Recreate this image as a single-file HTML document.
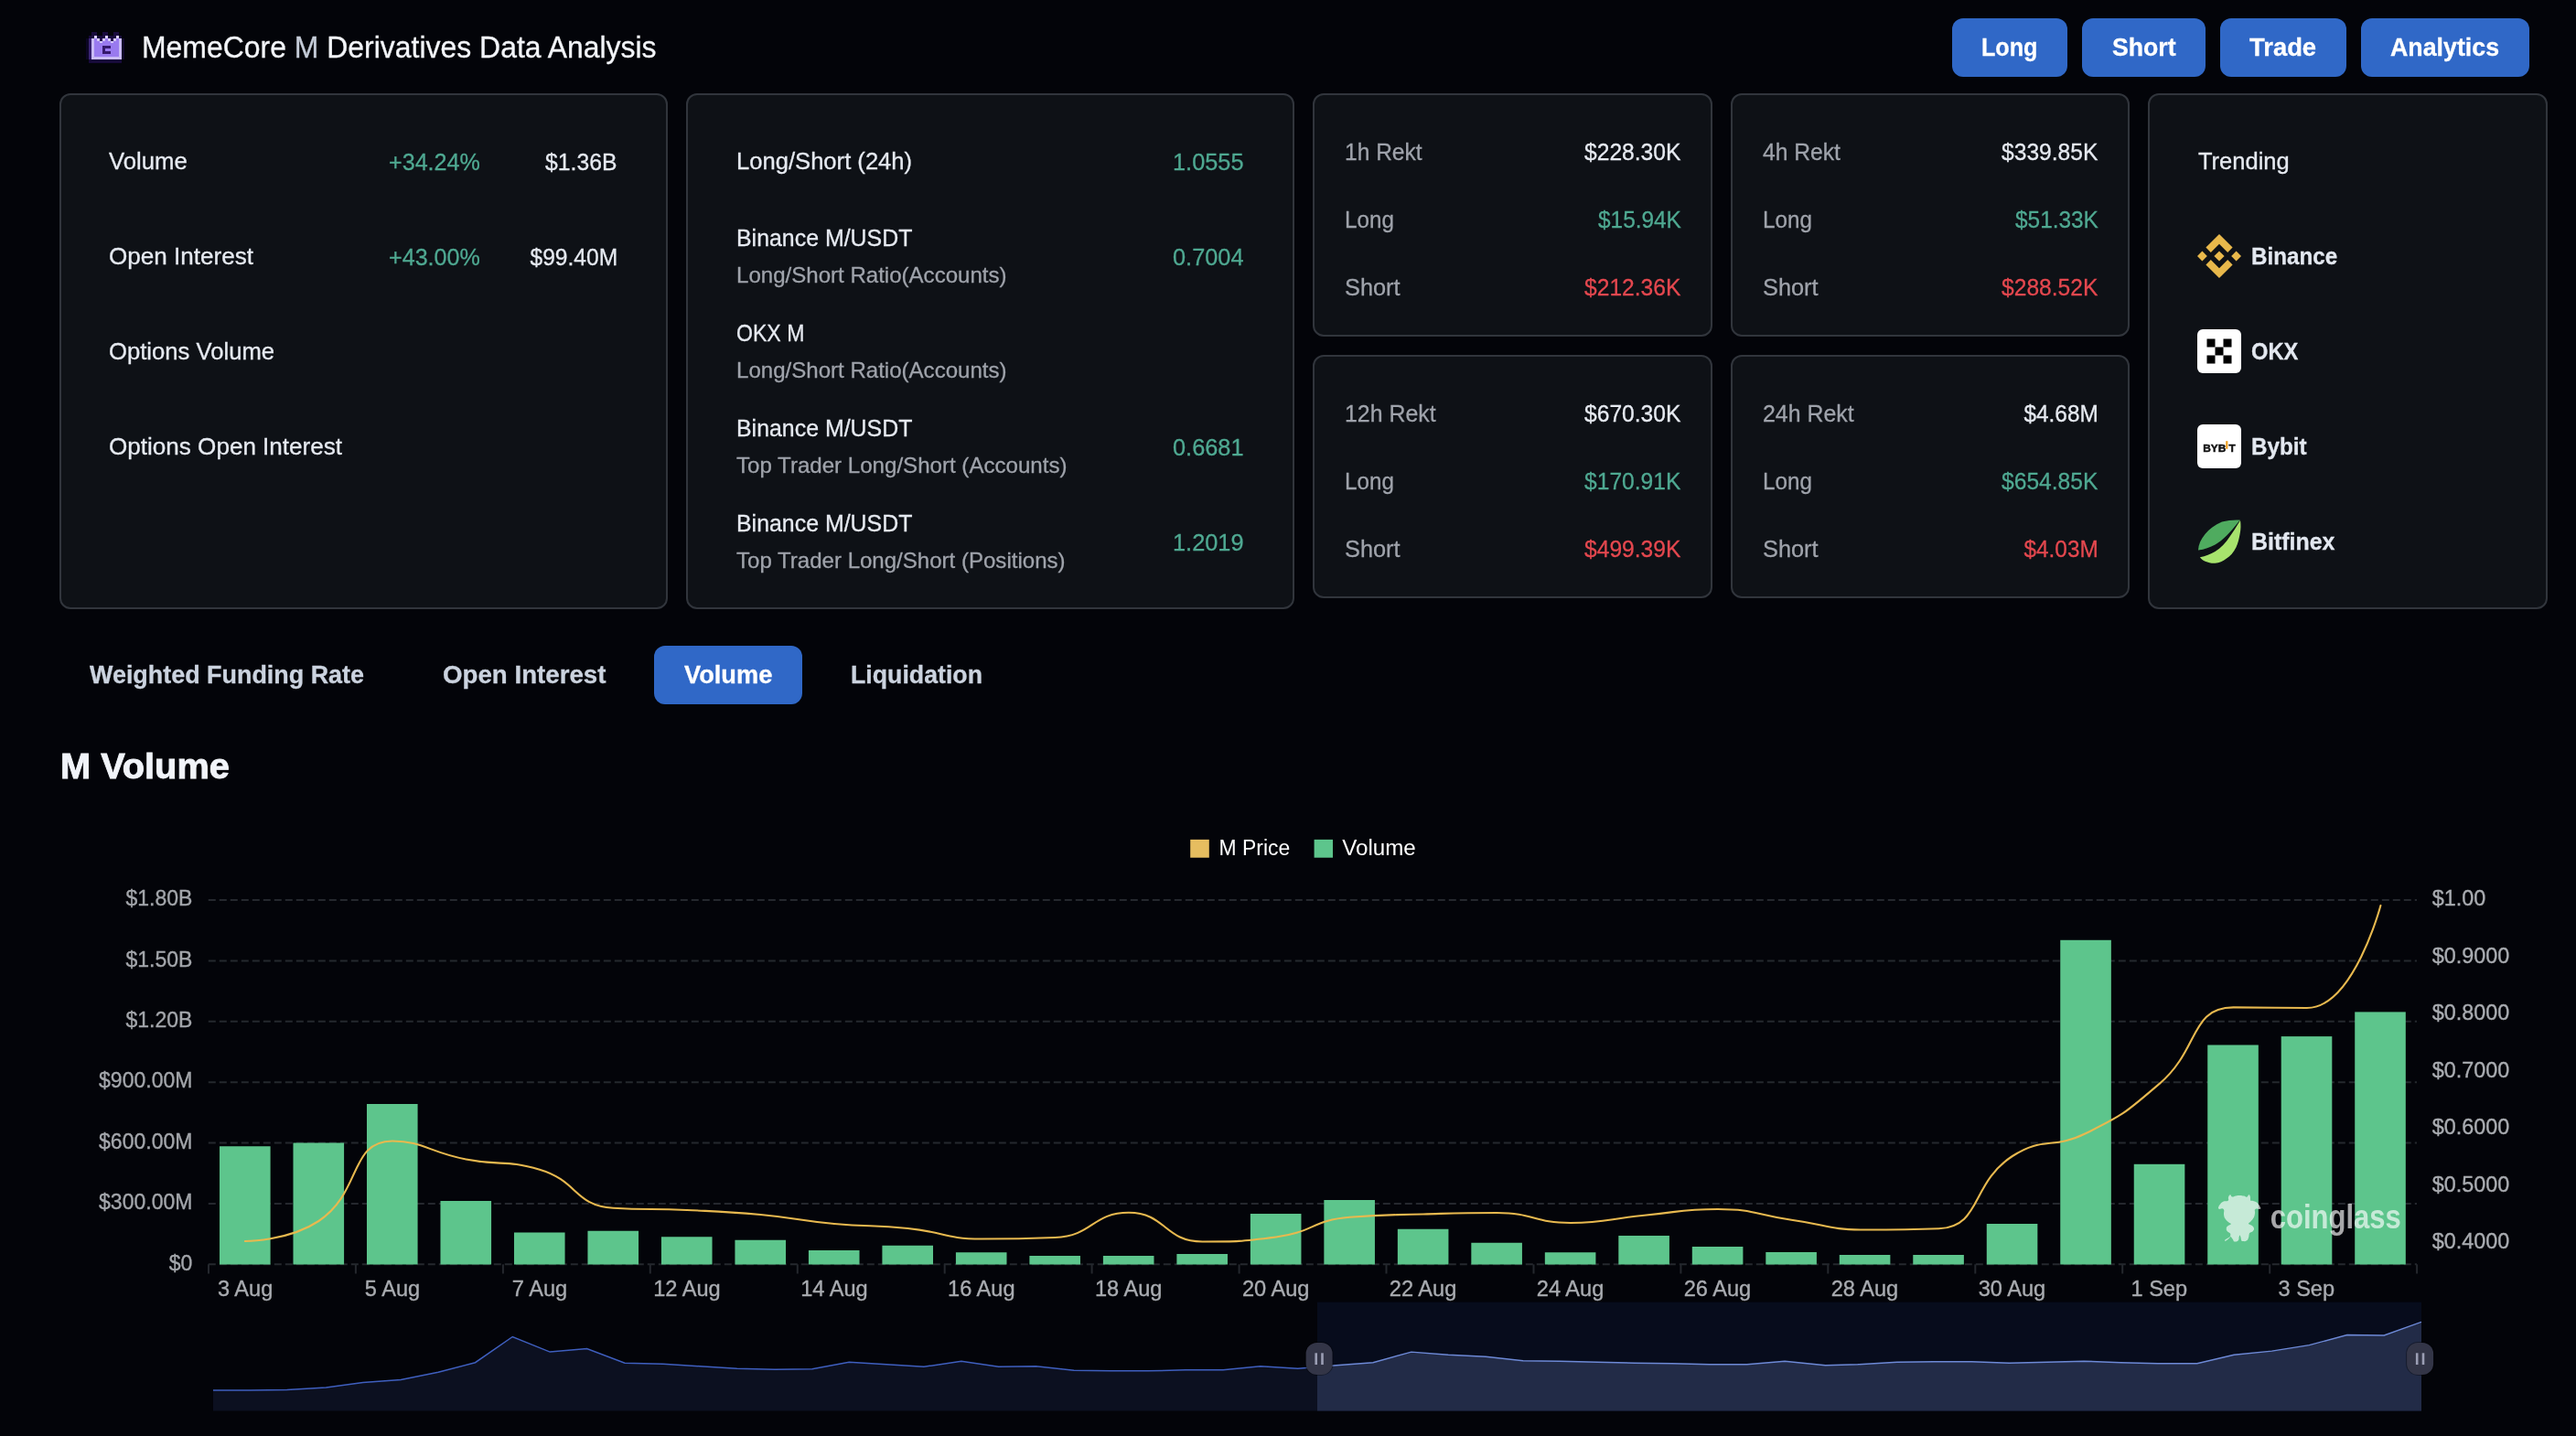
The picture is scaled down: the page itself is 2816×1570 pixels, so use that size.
<!DOCTYPE html>
<html lang="en"><head><meta charset="utf-8"><title>MemeCore M Derivatives Data Analysis</title>
<style>
html,body{margin:0;padding:0;background:#030409;}
body{width:2816px;height:1570px;overflow:hidden;position:relative;font-family:"Liberation Sans",sans-serif;}
#app{position:absolute;left:0;top:0;width:2816px;height:1570px;will-change:transform}
.abs{position:absolute;display:block}
.t{position:absolute;white-space:nowrap;line-height:1;display:block;-webkit-text-stroke:0.3px currentColor}
.card{position:absolute;box-sizing:border-box;background:#0e1116;border:2px solid #31353c;border-radius:12px}
.btn{position:absolute;background:#3068c7;border-radius:12px}
</style></head>
<body>
<div id="app">
<svg class="abs" style="left:94px;top:35px" width="44" height="35" viewBox="94 35 44 35" shape-rendering="crispEdges">
<rect x="94" y="41.8" width="3.2" height="23.2" fill="#0c0624"/>
<rect x="97" y="39.2" width="36" height="29.6" fill="#170a3a"/>
<rect x="133" y="41.8" width="3" height="23.2" fill="#0e0628"/>
<rect x="100" y="35.2" width="6" height="4.2" fill="#190b3d"/><rect x="112" y="35.2" width="6" height="4.2" fill="#190b3d"/><rect x="124" y="35.2" width="6" height="4.2" fill="#190b3d"/>
<rect x="97" y="41.8" width="3" height="23.2" fill="#36216f"/>
<rect x="100" y="41.8" width="33" height="23.2" fill="#c9bbf7"/>
<rect x="103" y="41.8" width="27" height="20.3" fill="#997aef"/>
<rect x="109" y="41.8" width="3" height="2.7" fill="#25114f"/><rect x="121" y="41.8" width="3" height="2.7" fill="#25114f"/>
<rect x="103" y="39.2" width="3" height="2.7" fill="#d9cefb"/><rect x="115" y="39.2" width="3" height="2.7" fill="#d9cefb"/><rect x="127" y="39.2" width="3" height="2.7" fill="#d9cefb"/>
<rect x="106" y="41.8" width="3" height="2.7" fill="#d3c6fa"/><rect x="112" y="41.8" width="3" height="2.7" fill="#d3c6fa"/><rect x="118" y="41.8" width="3" height="2.7" fill="#d3c6fa"/><rect x="124" y="41.8" width="3" height="2.7" fill="#d3c6fa"/>
<rect x="109" y="44.5" width="3" height="2.7" fill="#d3c6fa"/><rect x="121" y="44.5" width="3" height="2.7" fill="#d3c6fa"/>
<path d="M112.1 50.3H120.8V53.4H115.2V56.3H120.8V59.2H112.1Z" fill="#35196d"/>
</svg>
<span class="t" id="t1" style="top:35.5px;font-size:32.5px;color:#f3f5f9;left:154.6px;transform-origin:0 50%;transform:scaleX(0.9825);">MemeCore <span style="color:#c5ccd8">M</span> Derivatives Data Analysis</span>
<div class="btn" style="left:2134px;top:20px;width:126px;height:64px"></div>
<span class="t" id="t2" style="top:38.1px;font-size:28px;color:#ffffff;left:2166.4px;transform-origin:0 50%;font-weight:700;transform:scaleX(0.8985);">Long</span>
<div class="btn" style="left:2276px;top:20px;width:135px;height:64px"></div>
<span class="t" id="t3" style="top:38.1px;font-size:28px;color:#ffffff;left:2308.8px;transform-origin:0 50%;font-weight:700;transform:scaleX(0.9521);">Short</span>
<div class="btn" style="left:2427px;top:20px;width:138px;height:64px"></div>
<span class="t" id="t4" style="top:38.1px;font-size:28px;color:#ffffff;left:2459.3px;transform-origin:0 50%;font-weight:700;transform:scaleX(0.9787);">Trade</span>
<div class="btn" style="left:2581px;top:20px;width:184px;height:64px"></div>
<span class="t" id="t5" style="top:38.1px;font-size:28px;color:#ffffff;left:2613.2px;transform-origin:0 50%;font-weight:700;transform:scaleX(0.9560);">Analytics</span>
<div class="card" style="left:65.0px;top:102.0px;width:665.0px;height:564.0px"></div>
<div class="card" style="left:750.0px;top:102.0px;width:665.0px;height:564.0px"></div>
<div class="card" style="left:1435.0px;top:102.0px;width:437.0px;height:266.0px"></div>
<div class="card" style="left:1892.0px;top:102.0px;width:436.0px;height:266.0px"></div>
<div class="card" style="left:1435.0px;top:388.0px;width:437.0px;height:266.0px"></div>
<div class="card" style="left:1892.0px;top:388.0px;width:436.0px;height:266.0px"></div>
<div class="card" style="left:2348.0px;top:102.0px;width:437.0px;height:564.0px"></div>
<span class="t" id="t6" style="top:163.0px;font-size:26px;color:#e6eaf1;left:119.0px;transform-origin:0 50%;transform:scaleX(0.9885);">Volume</span>
<span class="t" id="t7" style="top:163.5px;font-size:26px;color:#4fa992;left:425.4px;transform-origin:0 50%;transform:scaleX(0.9660);">+34.24%</span>
<span class="t" id="t8" style="top:163.5px;font-size:26px;color:#e6eaf1;right:2141.2px;transform-origin:100% 50%;transform:scaleX(0.9512);">$1.36B</span>
<span class="t" id="t9" style="top:267.0px;font-size:26px;color:#e6eaf1;left:119.0px;transform-origin:0 50%;transform:scaleX(1.0032);">Open Interest</span>
<span class="t" id="t10" style="top:267.5px;font-size:26px;color:#4fa992;left:425.4px;transform-origin:0 50%;transform:scaleX(0.9660);">+43.00%</span>
<span class="t" id="t11" style="top:267.5px;font-size:26px;color:#e6eaf1;right:2141.2px;transform-origin:100% 50%;transform:scaleX(0.9455);">$99.40M</span>
<span class="t" id="t12" style="top:371.0px;font-size:26px;color:#e6eaf1;left:119.0px;transform-origin:0 50%;transform:scaleX(0.9864);">Options Volume</span>
<span class="t" id="t13" style="top:475.0px;font-size:26px;color:#e6eaf1;left:119.0px;transform-origin:0 50%;transform:scaleX(1.0028);">Options Open Interest</span>
<span class="t" id="t14" style="top:163.2px;font-size:26px;color:#e6eaf1;left:804.8px;transform-origin:0 50%;transform:scaleX(0.9846);">Long/Short (24h)</span>
<span class="t" id="t15" style="top:164.0px;font-size:26px;color:#4fa992;right:1456.0px;transform-origin:100% 50%;transform:scaleX(0.9750);">1.0555</span>
<span class="t" id="t16" style="top:247.2px;font-size:26px;color:#e6eaf1;left:804.8px;transform-origin:0 50%;transform:scaleX(0.9577);">Binance M/USDT</span>
<span class="t" id="t17" style="top:289.1px;font-size:24px;color:#9fa3ab;left:804.8px;transform-origin:0 50%;transform:scaleX(1.0024);">Long/Short Ratio(Accounts)</span>
<span class="t" id="t18" style="top:268.2px;font-size:26px;color:#4fa992;right:1456.0px;transform-origin:100% 50%;transform:scaleX(0.9750);">0.7004</span>
<span class="t" id="t19" style="top:351.2px;font-size:26px;color:#e6eaf1;left:804.8px;transform-origin:0 50%;transform:scaleX(0.8881);">OKX M</span>
<span class="t" id="t20" style="top:393.1px;font-size:24px;color:#9fa3ab;left:804.8px;transform-origin:0 50%;transform:scaleX(1.0024);">Long/Short Ratio(Accounts)</span>
<span class="t" id="t21" style="top:455.2px;font-size:26px;color:#e6eaf1;left:804.8px;transform-origin:0 50%;transform:scaleX(0.9577);">Binance M/USDT</span>
<span class="t" id="t22" style="top:497.1px;font-size:24px;color:#9fa3ab;left:804.8px;transform-origin:0 50%;transform:scaleX(1.0036);">Top Trader Long/Short (Accounts)</span>
<span class="t" id="t23" style="top:476.2px;font-size:26px;color:#4fa992;right:1456.0px;transform-origin:100% 50%;transform:scaleX(0.9750);">0.6681</span>
<span class="t" id="t24" style="top:559.2px;font-size:26px;color:#e6eaf1;left:804.8px;transform-origin:0 50%;transform:scaleX(0.9577);">Binance M/USDT</span>
<span class="t" id="t25" style="top:601.1px;font-size:24px;color:#9fa3ab;left:804.8px;transform-origin:0 50%;transform:scaleX(1.0019);">Top Trader Long/Short (Positions)</span>
<span class="t" id="t26" style="top:580.2px;font-size:26px;color:#4fa992;right:1456.0px;transform-origin:100% 50%;transform:scaleX(0.9750);">1.2019</span>
<span class="t" id="t27" style="top:153.0px;font-size:26px;color:#9fa3ab;left:1470.0px;transform-origin:0 50%;transform:scaleX(0.9444);">1h Rekt</span>
<span class="t" id="t28" style="top:153.3px;font-size:26px;color:#e6eaf1;right:978.6px;transform-origin:100% 50%;transform:scaleX(0.9459);">$228.30K</span>
<span class="t" id="t29" style="top:227.0px;font-size:26px;color:#9fa3ab;left:1470.0px;transform-origin:0 50%;transform:scaleX(0.9310);">Long</span>
<span class="t" id="t30" style="top:227.3px;font-size:26px;color:#4fa992;right:978.6px;transform-origin:100% 50%;transform:scaleX(0.9381);">$15.94K</span>
<span class="t" id="t31" style="top:301.0px;font-size:26px;color:#9fa3ab;left:1470.0px;transform-origin:0 50%;transform:scaleX(0.9742);">Short</span>
<span class="t" id="t32" style="top:301.3px;font-size:26px;color:#e5484f;right:978.6px;transform-origin:100% 50%;transform:scaleX(0.9459);">$212.36K</span>
<span class="t" id="t33" style="top:153.0px;font-size:26px;color:#9fa3ab;left:1927.0px;transform-origin:0 50%;transform:scaleX(0.9478);">4h Rekt</span>
<span class="t" id="t34" style="top:153.3px;font-size:26px;color:#e6eaf1;right:522.6px;transform-origin:100% 50%;transform:scaleX(0.9459);">$339.85K</span>
<span class="t" id="t35" style="top:227.0px;font-size:26px;color:#9fa3ab;left:1927.0px;transform-origin:0 50%;transform:scaleX(0.9310);">Long</span>
<span class="t" id="t36" style="top:227.3px;font-size:26px;color:#4fa992;right:522.6px;transform-origin:100% 50%;transform:scaleX(0.9381);">$51.33K</span>
<span class="t" id="t37" style="top:301.0px;font-size:26px;color:#9fa3ab;left:1927.0px;transform-origin:0 50%;transform:scaleX(0.9742);">Short</span>
<span class="t" id="t38" style="top:301.3px;font-size:26px;color:#e5484f;right:522.6px;transform-origin:100% 50%;transform:scaleX(0.9459);">$288.52K</span>
<span class="t" id="t39" style="top:439.0px;font-size:26px;color:#9fa3ab;left:1470.0px;transform-origin:0 50%;transform:scaleX(0.9567);">12h Rekt</span>
<span class="t" id="t40" style="top:439.3px;font-size:26px;color:#e6eaf1;right:978.6px;transform-origin:100% 50%;transform:scaleX(0.9459);">$670.30K</span>
<span class="t" id="t41" style="top:513.0px;font-size:26px;color:#9fa3ab;left:1470.0px;transform-origin:0 50%;transform:scaleX(0.9310);">Long</span>
<span class="t" id="t42" style="top:513.3px;font-size:26px;color:#4fa992;right:978.6px;transform-origin:100% 50%;transform:scaleX(0.9459);">$170.91K</span>
<span class="t" id="t43" style="top:587.0px;font-size:26px;color:#9fa3ab;left:1470.0px;transform-origin:0 50%;transform:scaleX(0.9742);">Short</span>
<span class="t" id="t44" style="top:587.3px;font-size:26px;color:#e5484f;right:978.6px;transform-origin:100% 50%;transform:scaleX(0.9459);">$499.39K</span>
<span class="t" id="t45" style="top:439.0px;font-size:26px;color:#9fa3ab;left:1927.0px;transform-origin:0 50%;transform:scaleX(0.9567);">24h Rekt</span>
<span class="t" id="t46" style="top:439.3px;font-size:26px;color:#e6eaf1;right:522.6px;transform-origin:100% 50%;transform:scaleX(0.9368);">$4.68M</span>
<span class="t" id="t47" style="top:513.0px;font-size:26px;color:#9fa3ab;left:1927.0px;transform-origin:0 50%;transform:scaleX(0.9310);">Long</span>
<span class="t" id="t48" style="top:513.3px;font-size:26px;color:#4fa992;right:522.6px;transform-origin:100% 50%;transform:scaleX(0.9459);">$654.85K</span>
<span class="t" id="t49" style="top:587.0px;font-size:26px;color:#9fa3ab;left:1927.0px;transform-origin:0 50%;transform:scaleX(0.9742);">Short</span>
<span class="t" id="t50" style="top:587.3px;font-size:26px;color:#e5484f;right:522.6px;transform-origin:100% 50%;transform:scaleX(0.9368);">$4.03M</span>
<span class="t" id="t51" style="top:163.0px;font-size:26px;color:#e6eaf1;left:2402.8px;transform-origin:0 50%;transform:scaleX(0.9804);">Trending</span>
<svg class="abs" style="left:2402px;top:256px" width="48" height="48" viewBox="0 0 48 48">
<g fill="#e8b84b"><path d="M24 0 38.6 14.6 33.2 20 24 10.8 14.8 20 9.4 14.6Z"/><path d="M24 48 38.6 33.4 33.2 28 24 37.2 14.8 28 9.4 33.4Z"/>
<path d="M24 18.4 29.6 24 24 29.6 18.4 24Z"/><path d="M5.4 18.6 10.8 24 5.4 29.4 0 24Z"/><path d="M42.6 18.6 48 24 42.6 29.4 37.2 24Z"/></g></svg>
<svg class="abs" style="left:2402px;top:360px" width="48" height="48" viewBox="0 0 48 48">
<rect width="48" height="48" rx="6" fill="#fff"/><g fill="#000"><rect x="10.5" y="10.5" width="9" height="9"/><rect x="28.5" y="10.5" width="9" height="9"/><rect x="19.5" y="19.5" width="9" height="9"/><rect x="10.5" y="28.5" width="9" height="9"/><rect x="28.5" y="28.5" width="9" height="9"/></g></svg>
<svg class="abs" style="left:2402px;top:464px" width="48" height="48" viewBox="0 0 48 48">
<rect width="48" height="48" rx="6" fill="#fff"/>
<text x="6.2" y="29.8" font-family="Liberation Sans, sans-serif" font-weight="700" font-size="11.8" fill="#111" stroke="#111" stroke-width="0.5" textLength="35.6" lengthAdjust="spacingAndGlyphs">BYB T</text>
<rect x="31.2" y="18.2" width="2.2" height="8.6" fill="#f0a020"/></svg>
<svg class="abs" style="left:2402px;top:568px" width="48" height="48" viewBox="0 0 48 48">
<path d="M46.8 0.6C40 0.2 33 1 27 2.6 19 6 13 10.5 8.5 16 4 21.5 1.2 27.5 1 33.6 8 32.5 14 30.5 19.5 27.4 28 22.5 36 14 46 1.4Z" fill="#4fab5f"/>
<path d="M47 0.8C47.8 6 47.6 11 46.7 15.2 45.8 20.5 44.5 26 42.4 30.5 39.8 36 36 40 31.7 42.7 28 45.5 24 47.6 19.5 47.8 15.5 48 12 47.2 8.7 45.8 6.5 44.8 4.5 43.3 2.9 41.2 9 40 14.5 38 19.5 35 26 31 31 25.5 34.8 19.8 39 14 43 7.5 46.6 1.6Z" fill="#a7e36d"/></svg>
<span class="t" id="t52" style="top:266.8px;font-size:26px;color:#e3e8f0;left:2461.3px;transform-origin:0 50%;font-weight:700;transform:scaleX(0.9307);">Binance</span>
<span class="t" id="t53" style="top:370.8px;font-size:26px;color:#e3e8f0;left:2461.3px;transform-origin:0 50%;font-weight:700;transform:scaleX(0.9107);">OKX</span>
<span class="t" id="t54" style="top:474.6px;font-size:26px;color:#e3e8f0;left:2461.3px;transform-origin:0 50%;font-weight:700;transform:scaleX(0.9323);">Bybit</span>
<span class="t" id="t55" style="top:578.8px;font-size:26px;color:#e3e8f0;left:2461.3px;transform-origin:0 50%;font-weight:700;transform:scaleX(0.9579);">Bitfinex</span>
<div class="btn" style="left:715px;top:706px;width:162.3px;height:64px"></div>
<span class="t" id="t56" style="top:724.6px;font-size:27px;color:#cbd3df;left:97.8px;transform-origin:0 50%;font-weight:700;transform:scaleX(0.9967);">Weighted Funding Rate</span>
<span class="t" id="t57" style="top:724.6px;font-size:27px;color:#cbd3df;left:483.6px;transform-origin:0 50%;font-weight:700;transform:scaleX(1.0253);">Open Interest</span>
<span class="t" id="t58" style="top:724.6px;font-size:27px;color:#fff;left:747.5px;transform-origin:0 50%;font-weight:700;transform:scaleX(1.0083);">Volume</span>
<span class="t" id="t59" style="top:724.6px;font-size:27px;color:#cbd3df;left:930.2px;transform-origin:0 50%;font-weight:700;transform:scaleX(0.9897);">Liquidation</span>
<span class="t" id="t60" style="top:818.0px;font-size:39px;color:#f1f4f9;left:66.2px;transform-origin:0 50%;font-weight:700;transform:scaleX(1.0199);-webkit-text-stroke:0.9px currentColor;">M Volume</span>
<svg class="abs" style="left:0;top:880px" width="2816" height="690" viewBox="0 880 2816 690" font-family="Liberation Sans, sans-serif" stroke-width="0.35">
<rect x="1301.2" y="917.9" width="20.6" height="19.8" fill="#e6bd60"/>
<rect x="1436.6" y="917.9" width="20.4" height="19.8" fill="#5dc58c"/>
<text x="1332.6" y="934.8" font-size="23.5" fill="#fff" textLength="77.6" lengthAdjust="spacingAndGlyphs">M Price</text>
<text x="1467.3" y="934.8" font-size="23.5" fill="#fff" textLength="80.5" lengthAdjust="spacingAndGlyphs">Volume</text>
<line x1="227.8" x2="2642" y1="1382.3" y2="1382.3" stroke="#25282e" stroke-width="2" stroke-dasharray="8 4"/>
<text x="210.4" y="1388.5" font-size="23" fill="#a3a6ab" stroke="#a3a6ab" text-anchor="end">$0</text>
<line x1="227.8" x2="2642" y1="1315.9" y2="1315.9" stroke="#25282e" stroke-width="2" stroke-dasharray="8 4"/>
<text x="210.4" y="1322.1" font-size="23" fill="#a3a6ab" stroke="#a3a6ab" text-anchor="end">$300.00M</text>
<line x1="227.8" x2="2642" y1="1249.5" y2="1249.5" stroke="#25282e" stroke-width="2" stroke-dasharray="8 4"/>
<text x="210.4" y="1255.7" font-size="23" fill="#a3a6ab" stroke="#a3a6ab" text-anchor="end">$600.00M</text>
<line x1="227.8" x2="2642" y1="1183.2" y2="1183.2" stroke="#25282e" stroke-width="2" stroke-dasharray="8 4"/>
<text x="210.4" y="1189.4" font-size="23" fill="#a3a6ab" stroke="#a3a6ab" text-anchor="end">$900.00M</text>
<line x1="227.8" x2="2642" y1="1116.8" y2="1116.8" stroke="#25282e" stroke-width="2" stroke-dasharray="8 4"/>
<text x="210.4" y="1123.0" font-size="23" fill="#a3a6ab" stroke="#a3a6ab" text-anchor="end">$1.20B</text>
<line x1="227.8" x2="2642" y1="1050.4" y2="1050.4" stroke="#25282e" stroke-width="2" stroke-dasharray="8 4"/>
<text x="210.4" y="1056.6" font-size="23" fill="#a3a6ab" stroke="#a3a6ab" text-anchor="end">$1.50B</text>
<line x1="227.8" x2="2642" y1="984.0" y2="984.0" stroke="#25282e" stroke-width="2" stroke-dasharray="8 4"/>
<text x="210.4" y="990.2" font-size="23" fill="#a3a6ab" stroke="#a3a6ab" text-anchor="end">$1.80B</text>
<text x="2658.8" y="990.3" font-size="23.4" fill="#a9acb1" stroke="#a9acb1">$1.00</text>
<text x="2658.8" y="1052.8" font-size="23.4" fill="#a9acb1" stroke="#a9acb1">$0.9000</text>
<text x="2658.8" y="1115.3" font-size="23.4" fill="#a9acb1" stroke="#a9acb1">$0.8000</text>
<text x="2658.8" y="1177.8" font-size="23.4" fill="#a9acb1" stroke="#a9acb1">$0.7000</text>
<text x="2658.8" y="1240.3" font-size="23.4" fill="#a9acb1" stroke="#a9acb1">$0.6000</text>
<text x="2658.8" y="1302.8" font-size="23.4" fill="#a9acb1" stroke="#a9acb1">$0.5000</text>
<text x="2658.8" y="1365.3" font-size="23.4" fill="#a9acb1" stroke="#a9acb1">$0.4000</text>
<line x1="228.0" x2="228.0" y1="1382.3" y2="1392.5" stroke="#25282e" stroke-width="2"/>
<line x1="388.9" x2="388.9" y1="1382.3" y2="1392.5" stroke="#25282e" stroke-width="2"/>
<line x1="549.9" x2="549.9" y1="1382.3" y2="1392.5" stroke="#25282e" stroke-width="2"/>
<line x1="710.8" x2="710.8" y1="1382.3" y2="1392.5" stroke="#25282e" stroke-width="2"/>
<line x1="871.8" x2="871.8" y1="1382.3" y2="1392.5" stroke="#25282e" stroke-width="2"/>
<line x1="1032.7" x2="1032.7" y1="1382.3" y2="1392.5" stroke="#25282e" stroke-width="2"/>
<line x1="1193.6" x2="1193.6" y1="1382.3" y2="1392.5" stroke="#25282e" stroke-width="2"/>
<line x1="1354.6" x2="1354.6" y1="1382.3" y2="1392.5" stroke="#25282e" stroke-width="2"/>
<line x1="1515.5" x2="1515.5" y1="1382.3" y2="1392.5" stroke="#25282e" stroke-width="2"/>
<line x1="1676.5" x2="1676.5" y1="1382.3" y2="1392.5" stroke="#25282e" stroke-width="2"/>
<line x1="1837.4" x2="1837.4" y1="1382.3" y2="1392.5" stroke="#25282e" stroke-width="2"/>
<line x1="1998.3" x2="1998.3" y1="1382.3" y2="1392.5" stroke="#25282e" stroke-width="2"/>
<line x1="2159.3" x2="2159.3" y1="1382.3" y2="1392.5" stroke="#25282e" stroke-width="2"/>
<line x1="2320.2" x2="2320.2" y1="1382.3" y2="1392.5" stroke="#25282e" stroke-width="2"/>
<line x1="2481.2" x2="2481.2" y1="1382.3" y2="1392.5" stroke="#25282e" stroke-width="2"/>
<line x1="2642.1" x2="2642.1" y1="1382.3" y2="1392.5" stroke="#25282e" stroke-width="2"/>
<text x="268.1" y="1417" font-size="23.6" fill="#a9acb1" stroke="#a9acb1" text-anchor="middle">3 Aug</text>
<text x="429.0" y="1417" font-size="23.6" fill="#a9acb1" stroke="#a9acb1" text-anchor="middle">5 Aug</text>
<text x="590.0" y="1417" font-size="23.6" fill="#a9acb1" stroke="#a9acb1" text-anchor="middle">7 Aug</text>
<text x="750.9" y="1417" font-size="23.6" fill="#a9acb1" stroke="#a9acb1" text-anchor="middle">12 Aug</text>
<text x="911.9" y="1417" font-size="23.6" fill="#a9acb1" stroke="#a9acb1" text-anchor="middle">14 Aug</text>
<text x="1072.8" y="1417" font-size="23.6" fill="#a9acb1" stroke="#a9acb1" text-anchor="middle">16 Aug</text>
<text x="1233.7" y="1417" font-size="23.6" fill="#a9acb1" stroke="#a9acb1" text-anchor="middle">18 Aug</text>
<text x="1394.7" y="1417" font-size="23.6" fill="#a9acb1" stroke="#a9acb1" text-anchor="middle">20 Aug</text>
<text x="1555.6" y="1417" font-size="23.6" fill="#a9acb1" stroke="#a9acb1" text-anchor="middle">22 Aug</text>
<text x="1716.6" y="1417" font-size="23.6" fill="#a9acb1" stroke="#a9acb1" text-anchor="middle">24 Aug</text>
<text x="1877.5" y="1417" font-size="23.6" fill="#a9acb1" stroke="#a9acb1" text-anchor="middle">26 Aug</text>
<text x="2038.4" y="1417" font-size="23.6" fill="#a9acb1" stroke="#a9acb1" text-anchor="middle">28 Aug</text>
<text x="2199.4" y="1417" font-size="23.6" fill="#a9acb1" stroke="#a9acb1" text-anchor="middle">30 Aug</text>
<text x="2360.3" y="1417" font-size="23.6" fill="#a9acb1" stroke="#a9acb1" text-anchor="middle">1 Sep</text>
<text x="2521.3" y="1417" font-size="23.6" fill="#a9acb1" stroke="#a9acb1" text-anchor="middle">3 Sep</text>
<rect x="240.00" y="1253.25" width="55.6" height="129.25" fill="#5dc58c"/>
<rect x="320.49" y="1249.50" width="55.6" height="133.00" fill="#5dc58c"/>
<rect x="400.98" y="1207.00" width="55.6" height="175.50" fill="#5dc58c"/>
<rect x="481.47" y="1313.00" width="55.6" height="69.50" fill="#5dc58c"/>
<rect x="561.96" y="1347.50" width="55.6" height="35.00" fill="#5dc58c"/>
<rect x="642.45" y="1345.75" width="55.6" height="36.75" fill="#5dc58c"/>
<rect x="722.94" y="1352.25" width="55.6" height="30.25" fill="#5dc58c"/>
<rect x="803.43" y="1355.75" width="55.6" height="26.75" fill="#5dc58c"/>
<rect x="883.92" y="1367.00" width="55.6" height="15.50" fill="#5dc58c"/>
<rect x="964.41" y="1361.75" width="55.6" height="20.75" fill="#5dc58c"/>
<rect x="1044.90" y="1369.25" width="55.6" height="13.25" fill="#5dc58c"/>
<rect x="1125.39" y="1373.00" width="55.6" height="9.50" fill="#5dc58c"/>
<rect x="1205.88" y="1373.00" width="55.6" height="9.50" fill="#5dc58c"/>
<rect x="1286.37" y="1371.00" width="55.6" height="11.50" fill="#5dc58c"/>
<rect x="1366.86" y="1327.00" width="55.6" height="55.50" fill="#5dc58c"/>
<rect x="1447.35" y="1312.00" width="55.6" height="70.50" fill="#5dc58c"/>
<rect x="1527.84" y="1343.75" width="55.6" height="38.75" fill="#5dc58c"/>
<rect x="1608.33" y="1358.75" width="55.6" height="23.75" fill="#5dc58c"/>
<rect x="1688.82" y="1369.25" width="55.6" height="13.25" fill="#5dc58c"/>
<rect x="1769.31" y="1351.00" width="55.6" height="31.50" fill="#5dc58c"/>
<rect x="1849.80" y="1363.00" width="55.6" height="19.50" fill="#5dc58c"/>
<rect x="1930.29" y="1369.00" width="55.6" height="13.50" fill="#5dc58c"/>
<rect x="2010.78" y="1372.00" width="55.6" height="10.50" fill="#5dc58c"/>
<rect x="2091.27" y="1372.00" width="55.6" height="10.50" fill="#5dc58c"/>
<rect x="2171.76" y="1338.00" width="55.6" height="44.50" fill="#5dc58c"/>
<rect x="2252.25" y="1027.80" width="55.6" height="354.70" fill="#5dc58c"/>
<rect x="2332.74" y="1272.80" width="55.6" height="109.70" fill="#5dc58c"/>
<rect x="2413.23" y="1142.50" width="55.6" height="240.00" fill="#5dc58c"/>
<rect x="2493.72" y="1133.10" width="55.6" height="249.40" fill="#5dc58c"/>
<rect x="2574.21" y="1106.40" width="55.6" height="276.10" fill="#5dc58c"/>
<path d="M267.9 1357.0C267.9 1357.0 315.2 1357.0 348.4 1335.0C395.7 1303.7 381.5 1247.5 428.9 1247.5C462.0 1247.5 468.7 1259.6 509.4 1267.5C549.2 1275.2 551.9 1267.5 589.9 1278.8C632.4 1291.3 627.7 1318.2 670.4 1320.8C708.2 1323.0 710.7 1321.2 750.9 1323.0C791.2 1324.8 791.3 1324.3 831.4 1328.0C871.8 1331.8 871.5 1334.2 911.9 1338.0C952.0 1341.7 952.3 1338.9 992.4 1343.0C1032.8 1347.1 1032.5 1354.5 1072.9 1354.5C1113.0 1354.5 1114.2 1354.5 1153.4 1353.0C1194.7 1351.4 1194.0 1325.8 1233.9 1325.8C1274.5 1325.8 1272.7 1357.5 1314.4 1357.5C1353.2 1357.5 1355.3 1357.5 1394.9 1352.5C1435.8 1347.3 1434.5 1334.1 1475.4 1330.8C1515.0 1327.5 1515.6 1328.7 1555.9 1327.5C1596.1 1326.3 1596.3 1326.0 1636.4 1326.0C1676.8 1326.0 1676.6 1337.0 1716.9 1337.0C1757.1 1337.0 1757.1 1332.5 1797.4 1328.8C1837.6 1325.0 1837.8 1322.0 1877.9 1322.0C1918.3 1322.0 1918.1 1328.1 1958.4 1333.8C1998.6 1339.4 1998.5 1344.5 2038.9 1344.5C2079.0 1344.5 2085.9 1344.5 2119.4 1343.2C2166.4 1341.5 2153.8 1293.9 2199.9 1264.0C2234.3 1241.7 2243.0 1257.4 2280.4 1239.0C2323.5 1217.7 2324.2 1216.0 2360.9 1184.6C2404.7 1147.2 2393.9 1101.4 2441.4 1101.4C2474.4 1101.4 2492.2 1102.0 2521.9 1102.0C2572.7 1102.0 2602.4 990.0 2602.4 990.0" fill="none" stroke="#e8b94f" stroke-width="2.1" stroke-linejoin="round" stroke-linecap="round"/>
<g opacity="0.65" fill="#fff">
<path d="M2438.1 1306.2C2439.1 1306.1 2438.5 1308.2 2440.1 1308.5C2441.7 1308.8 2441.8 1307.8 2444.1 1307.4C2446.3 1306.9 2446.2 1306.9 2448.5 1306.9C2450.9 1307.0 2451.0 1307.1 2453.0 1307.6C2455.0 1308.1 2454.7 1309.1 2456.1 1308.7C2457.5 1308.3 2457.3 1306.3 2458.3 1306.2C2459.4 1306.2 2459.4 1306.8 2459.9 1308.5C2460.4 1310.1 2459.6 1311.3 2460.3 1312.5C2461.1 1313.7 2461.2 1312.5 2462.8 1312.9C2464.4 1313.4 2464.8 1313.3 2466.4 1314.3C2468.0 1315.2 2467.7 1315.1 2468.8 1316.5C2469.9 1317.9 2470.1 1318.2 2470.6 1319.6C2471.1 1321.0 2472.2 1321.2 2470.8 1321.8C2469.5 1322.5 2467.0 1320.6 2465.5 1321.9C2463.9 1323.2 2465.6 1324.0 2465.0 1326.7C2464.4 1329.5 2464.6 1329.7 2463.2 1332.1C2461.9 1334.5 2461.5 1334.1 2460.1 1335.7C2458.8 1337.2 2457.8 1336.8 2458.1 1337.9C2458.5 1339.0 2459.9 1338.4 2461.5 1339.7C2463.0 1341.0 2463.6 1341.1 2463.9 1342.8C2464.3 1344.5 2463.9 1344.6 2462.8 1345.9C2461.7 1347.2 2460.7 1346.9 2459.7 1347.7C2458.6 1348.5 2459.3 1347.5 2458.8 1349.0C2458.3 1350.6 2458.7 1351.5 2457.9 1353.5C2457.1 1355.5 2457.2 1355.7 2455.7 1356.6C2454.1 1357.6 2453.5 1357.2 2452.1 1357.1C2450.7 1356.9 2451.0 1357.4 2450.3 1356.2C2449.6 1355.0 2449.9 1354.2 2449.4 1352.6C2448.9 1351.1 2449.0 1350.4 2448.5 1350.4C2448.1 1350.4 2448.1 1351.1 2447.6 1352.6C2447.2 1354.2 2448.1 1354.9 2446.7 1356.2C2445.4 1357.5 2444.3 1357.8 2442.7 1357.5C2441.2 1357.3 2442.0 1356.7 2441.0 1355.3C2439.9 1353.9 2439.6 1352.8 2438.7 1352.2C2437.9 1351.5 2438.8 1352.0 2437.8 1352.8C2436.9 1353.7 2436.6 1354.2 2435.2 1355.3C2433.7 1356.4 2432.9 1356.8 2432.3 1356.8C2431.6 1356.8 2431.9 1356.1 2432.7 1355.3C2433.5 1354.5 2433.9 1354.6 2435.2 1353.7C2436.5 1352.9 2436.8 1353.3 2437.6 1352.2C2438.4 1351.0 2438.3 1350.6 2438.3 1349.5C2438.2 1348.4 2438.3 1348.9 2437.4 1347.9C2436.4 1347.0 2435.7 1347.2 2434.7 1345.9C2433.8 1344.7 2433.7 1344.7 2433.8 1343.2C2433.9 1341.8 2433.9 1341.9 2435.2 1340.6C2436.5 1339.3 2438.4 1339.4 2438.7 1338.3C2439.1 1337.3 2438.0 1338.0 2436.5 1336.6C2435.0 1335.1 2434.4 1335.1 2432.9 1333.0C2431.5 1330.9 2431.7 1331.4 2431.1 1328.5C2430.6 1325.6 2432.1 1323.9 2430.7 1322.1C2429.3 1320.3 2427.2 1322.5 2425.8 1321.8C2424.4 1321.2 2425.0 1321.0 2425.3 1319.6C2425.7 1318.2 2425.8 1318.0 2427.1 1316.5C2428.4 1315.0 2428.0 1314.8 2430.3 1313.8C2432.5 1312.8 2434.1 1314.0 2435.6 1312.7C2437.1 1311.4 2435.4 1310.6 2436.0 1308.9C2436.7 1307.2 2437.0 1306.4 2438.1 1306.2Z"/>
<text x="2481.8" y="1343.1" font-size="36.5" font-weight="700" textLength="143" lengthAdjust="spacingAndGlyphs">coinglass</text>
</g>
<defs><clipPath id="cs"><rect x="1440.0" y="1423.6" width="1207.0" height="119.1"/></clipPath>
<clipPath id="cu"><rect x="232.8" y="1423.6" width="1207.2" height="119.1"/></clipPath></defs>
<rect x="1440.0" y="1423.6" width="1207.0" height="119.1" fill="#070c1c"/>
<path d="M232.8 1542.7 L232.8 1520.0 L273.2 1520.0 L313.6 1519.5 L356.4 1517.0 L396.8 1511.4 L438.2 1508.4 L479.1 1500.3 L519.5 1489.7 L560.3 1461.5 L601.2 1478.1 L641.6 1474.6 L683.0 1490.2 L724.9 1491.3 L765.2 1493.8 L805.6 1496.3 L847.0 1497.3 L887.9 1496.8 L928.2 1489.2 L969.1 1491.8 L1010.0 1494.3 L1050.9 1488.2 L1091.7 1494.3 L1132.6 1493.8 L1174.0 1498.3 L1214.4 1498.8 L1254.8 1498.8 L1296.1 1497.8 L1337.0 1497.8 L1377.9 1493.8 L1418.8 1496.3 L1460.6 1492.8 L1500.9 1489.7 L1542.8 1478.1 L1583.2 1481.2 L1624.1 1483.2 L1665.0 1487.7 L1705.3 1488.2 L1746.2 1489.2 L1787.1 1490.2 L1828.0 1490.7 L1868.8 1491.8 L1909.7 1491.8 L1951.1 1488.2 L1995.5 1492.8 L2030.8 1491.8 L2073.7 1489.2 L2114.1 1488.7 L2155.5 1488.7 L2196.4 1490.2 L2237.7 1489.2 L2278.1 1488.2 L2318.5 1489.7 L2358.9 1490.7 L2401.8 1490.7 L2442.1 1481.2 L2483.5 1477.1 L2524.4 1470.6 L2565.8 1459.5 L2606.2 1460.0 L2647.0 1445.3 L2647.0 1542.7 Z" fill="#0c1020" clip-path="url(#cu)"/>
<path d="M232.8 1542.7 L232.8 1520.0 L273.2 1520.0 L313.6 1519.5 L356.4 1517.0 L396.8 1511.4 L438.2 1508.4 L479.1 1500.3 L519.5 1489.7 L560.3 1461.5 L601.2 1478.1 L641.6 1474.6 L683.0 1490.2 L724.9 1491.3 L765.2 1493.8 L805.6 1496.3 L847.0 1497.3 L887.9 1496.8 L928.2 1489.2 L969.1 1491.8 L1010.0 1494.3 L1050.9 1488.2 L1091.7 1494.3 L1132.6 1493.8 L1174.0 1498.3 L1214.4 1498.8 L1254.8 1498.8 L1296.1 1497.8 L1337.0 1497.8 L1377.9 1493.8 L1418.8 1496.3 L1460.6 1492.8 L1500.9 1489.7 L1542.8 1478.1 L1583.2 1481.2 L1624.1 1483.2 L1665.0 1487.7 L1705.3 1488.2 L1746.2 1489.2 L1787.1 1490.2 L1828.0 1490.7 L1868.8 1491.8 L1909.7 1491.8 L1951.1 1488.2 L1995.5 1492.8 L2030.8 1491.8 L2073.7 1489.2 L2114.1 1488.7 L2155.5 1488.7 L2196.4 1490.2 L2237.7 1489.2 L2278.1 1488.2 L2318.5 1489.7 L2358.9 1490.7 L2401.8 1490.7 L2442.1 1481.2 L2483.5 1477.1 L2524.4 1470.6 L2565.8 1459.5 L2606.2 1460.0 L2647.0 1445.3 L2647.0 1542.7 Z" fill="#222b47" clip-path="url(#cs)"/>
<polyline points="232.8,1520.0 273.2,1520.0 313.6,1519.5 356.4,1517.0 396.8,1511.4 438.2,1508.4 479.1,1500.3 519.5,1489.7 560.3,1461.5 601.2,1478.1 641.6,1474.6 683.0,1490.2 724.9,1491.3 765.2,1493.8 805.6,1496.3 847.0,1497.3 887.9,1496.8 928.2,1489.2 969.1,1491.8 1010.0,1494.3 1050.9,1488.2 1091.7,1494.3 1132.6,1493.8 1174.0,1498.3 1214.4,1498.8 1254.8,1498.8 1296.1,1497.8 1337.0,1497.8 1377.9,1493.8 1418.8,1496.3 1460.6,1492.8 1500.9,1489.7 1542.8,1478.1 1583.2,1481.2 1624.1,1483.2 1665.0,1487.7 1705.3,1488.2 1746.2,1489.2 1787.1,1490.2 1828.0,1490.7 1868.8,1491.8 1909.7,1491.8 1951.1,1488.2 1995.5,1492.8 2030.8,1491.8 2073.7,1489.2 2114.1,1488.7 2155.5,1488.7 2196.4,1490.2 2237.7,1489.2 2278.1,1488.2 2318.5,1489.7 2358.9,1490.7 2401.8,1490.7 2442.1,1481.2 2483.5,1477.1 2524.4,1470.6 2565.8,1459.5 2606.2,1460.0 2647.0,1445.3" fill="none" stroke="#3f5fbf" stroke-width="1.5" clip-path="url(#cu)"/>
<polyline points="232.8,1520.0 273.2,1520.0 313.6,1519.5 356.4,1517.0 396.8,1511.4 438.2,1508.4 479.1,1500.3 519.5,1489.7 560.3,1461.5 601.2,1478.1 641.6,1474.6 683.0,1490.2 724.9,1491.3 765.2,1493.8 805.6,1496.3 847.0,1497.3 887.9,1496.8 928.2,1489.2 969.1,1491.8 1010.0,1494.3 1050.9,1488.2 1091.7,1494.3 1132.6,1493.8 1174.0,1498.3 1214.4,1498.8 1254.8,1498.8 1296.1,1497.8 1337.0,1497.8 1377.9,1493.8 1418.8,1496.3 1460.6,1492.8 1500.9,1489.7 1542.8,1478.1 1583.2,1481.2 1624.1,1483.2 1665.0,1487.7 1705.3,1488.2 1746.2,1489.2 1787.1,1490.2 1828.0,1490.7 1868.8,1491.8 1909.7,1491.8 1951.1,1488.2 1995.5,1492.8 2030.8,1491.8 2073.7,1489.2 2114.1,1488.7 2155.5,1488.7 2196.4,1490.2 2237.7,1489.2 2278.1,1488.2 2318.5,1489.7 2358.9,1490.7 2401.8,1490.7 2442.1,1481.2 2483.5,1477.1 2524.4,1470.6 2565.8,1459.5 2606.2,1460.0 2647.0,1445.3" fill="none" stroke="#6d89d6" stroke-width="1.4" clip-path="url(#cs)"/>
<rect x="1426.6" y="1466.9" width="31" height="37" rx="13" fill="#000" opacity="0.35"/>
<rect x="1427.6" y="1467.9" width="29" height="35" rx="12" fill="#333547"/>
<rect x="1437.4" y="1479.3" width="2.6" height="12.7" fill="#9b9eb4"/><rect x="1444.2" y="1479.3" width="2.6" height="12.7" fill="#9b9eb4"/>
<rect x="2630.1" y="1466.9" width="31" height="37" rx="13" fill="#000" opacity="0.35"/>
<rect x="2631.1" y="1467.9" width="29" height="35" rx="12" fill="#333547"/>
<rect x="2640.9" y="1479.3" width="2.6" height="12.7" fill="#9b9eb4"/><rect x="2647.7" y="1479.3" width="2.6" height="12.7" fill="#9b9eb4"/>
</svg>
</div>
<script>(function(){var w=window.innerWidth;if(w&&Math.abs(w-2816)>1){document.getElementById("app").style.zoom=w/2816;}})();</script>
</body></html>
